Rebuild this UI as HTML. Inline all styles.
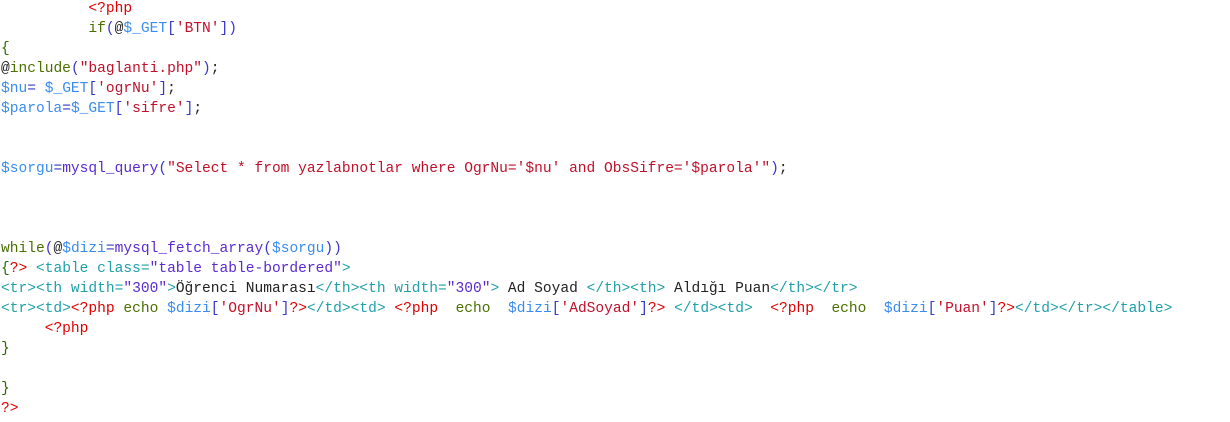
<!DOCTYPE html>
<html><head><meta charset="utf-8"><style>
body{margin:0;background:#fff;width:1230px;height:422px;overflow:hidden;position:relative}
pre{position:absolute;left:1px;top:-1px;margin:0;font-family:"Liberation Mono",monospace;font-size:14.57px;line-height:20px;color:#2a6a00}
.r{color:#e00000}.s{color:#c0102a}.v{color:#3a8cf0}.t{color:#20a0a8}.k{color:#4a7000}.p{color:#3838c8}.b{color:#222}.f{color:#5a2ad0}
</style></head><body><pre>          <span class="r">&lt;?php</span>
          <span class="k">if</span><span class="p">(</span><span class="b">@</span><span class="v">$_GET</span><span class="p">[</span><span class="s">'BTN'</span><span class="p">])</span>
{
<span class="b">@</span><span class="k">include</span><span class="p">(</span><span class="s">"baglanti.php"</span><span class="p">)</span><span class="b">;</span>
<span class="v">$nu</span><span class="p">=</span> <span class="v">$_GET</span><span class="p">[</span><span class="s">'ogrNu'</span><span class="p">]</span><span class="b">;</span>
<span class="v">$parola</span><span class="p">=</span><span class="v">$_GET</span><span class="p">[</span><span class="s">'sifre'</span><span class="p">]</span><span class="b">;</span>


<span class="v">$sorgu</span><span class="p">=</span><span class="f">mysql_query</span><span class="p">(</span><span class="s">"Select * from yazlabnotlar where OgrNu='$nu' and ObsSifre='$parola'"</span><span class="p">)</span><span class="b">;</span>



<span class="k">while</span><span class="p">(</span><span class="b">@</span><span class="v">$dizi</span><span class="p">=</span><span class="f">mysql_fetch_array</span><span class="p">(</span><span class="v">$sorgu</span><span class="p">))</span>
{<span class="r">?&gt;</span> <span class="t">&lt;table class=</span><span class="f">"table table-bordered"</span><span class="t">&gt;</span>
<span class="t">&lt;tr&gt;&lt;th width=</span><span class="f">"300"</span><span class="t">&gt;</span><span class="b">Öğrenci Numarası</span><span class="t">&lt;/th&gt;&lt;th width=</span><span class="f">"300"</span><span class="t">&gt;</span><span class="b"> Ad Soyad </span><span class="t">&lt;/th&gt;&lt;th&gt;</span><span class="b"> Aldığı Puan</span><span class="t">&lt;/th&gt;&lt;/tr&gt;</span>
<span class="t">&lt;tr&gt;&lt;td&gt;</span><span class="r">&lt;?php</span> <span class="k">echo</span> <span class="v">$dizi</span><span class="p">[</span><span class="s">'OgrNu'</span><span class="p">]</span><span class="r">?&gt;</span><span class="t">&lt;/td&gt;&lt;td&gt;</span> <span class="r">&lt;?php</span>  <span class="k">echo</span>  <span class="v">$dizi</span><span class="p">[</span><span class="s">'AdSoyad'</span><span class="p">]</span><span class="r">?&gt;</span> <span class="t">&lt;/td&gt;&lt;td&gt;</span>  <span class="r">&lt;?php</span>  <span class="k">echo</span>  <span class="v">$dizi</span><span class="p">[</span><span class="s">'Puan'</span><span class="p">]</span><span class="r">?&gt;</span><span class="t">&lt;/td&gt;&lt;/tr&gt;&lt;/table&gt;</span>
     <span class="r">&lt;?php</span>
}

}
<span class="r">?&gt;</span></pre></body></html>
